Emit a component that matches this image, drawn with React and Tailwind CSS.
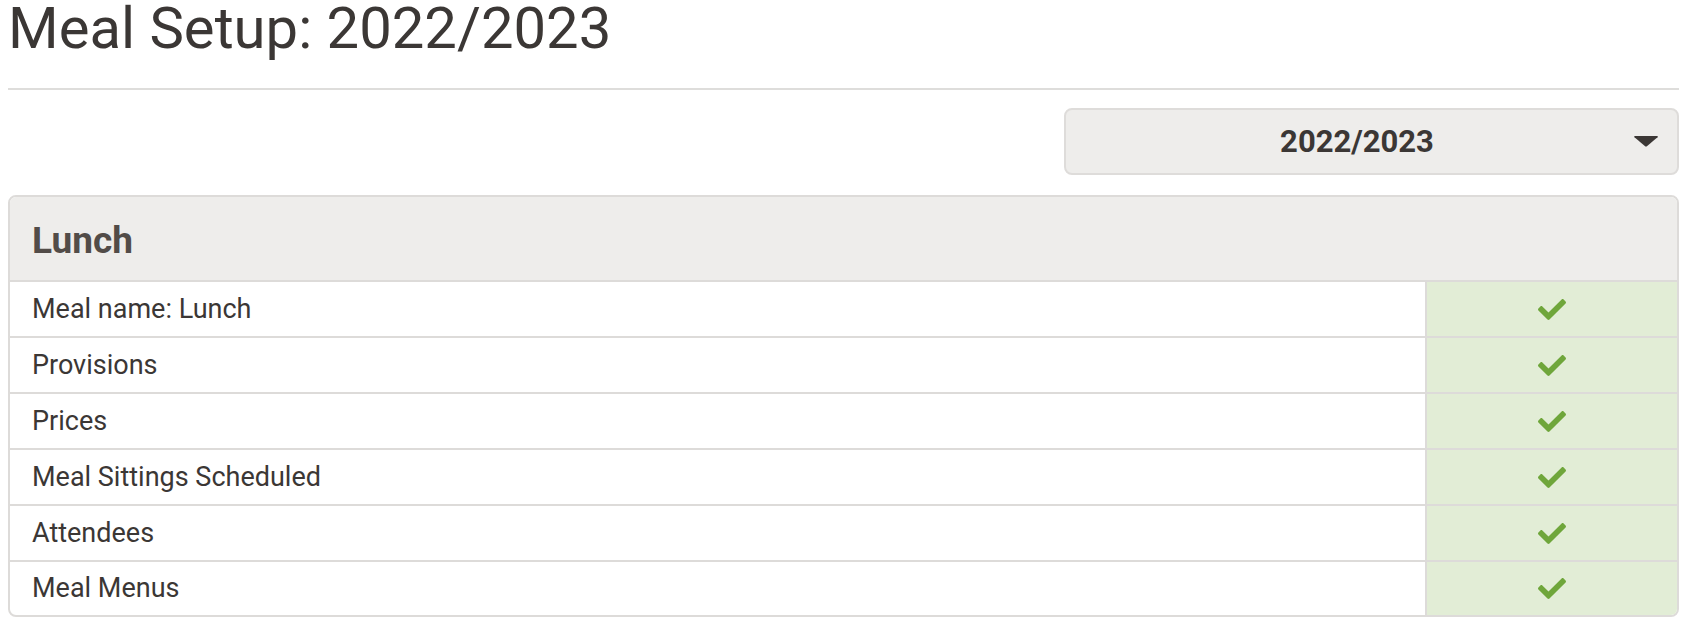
import React from "react";

const rows = [
  "Meal name: Lunch",
  "Provisions",
  "Prices",
  "Meal Sittings Scheduled",
  "Attendees",
  "Meal Menus",
];

function Check() {
  return (
    <svg width="28" height="21" viewBox="0 64 512 384" fill="#6fa63b" aria-hidden="true">
      <path d="M173.898 439.404l-166.4-166.4c-9.997-9.997-9.997-26.206 0-36.204l36.203-36.204c9.997-9.998 26.207-9.998 36.204 0L192 312.69 432.095 72.596c9.997-9.997 26.207-9.997 36.204 0l36.203 36.204c9.997 9.997 9.997 26.206 0 36.204l-294.4 294.401c-9.998 9.997-26.207 9.997-36.204-.001z" />
    </svg>
  );
}

function Caret() {
  return (
    <svg width="26" height="12" viewBox="0 0 26 12" aria-hidden="true">
      <path d="M2 1 L24 1 Q25.5 1 24.5 2.2 L14.2 11 Q13 12 11.8 11 L1.5 2.2 Q0.5 1 2 1 Z" fill="#3b3735" />
    </svg>
  );
}

export default function App() {
  return (
    <div className="bg-white min-h-[630px] text-[#3b3735]" style={{ fontFamily: "Roboto, 'Liberation Sans', sans-serif" }}>
      <div className="ml-[8px] w-[1671px]">
        <h1 className="text-[58px] leading-[57px] font-normal text-[#3b3735]">Meal Setup: 2022/2023</h1>
        <div className="mt-[31px] h-[2px] bg-[#dedddb]" />
        <div className="flex justify-end mt-[18px]">
          <div className="w-[615px] h-[67px] rounded-[8px] border-2 border-[#dedcda] bg-[#eeedeb] flex items-center relative">
            <div className="flex-1 text-center pr-[29px] text-[31px] font-bold leading-none text-[#3b3735]">2022/2023</div>
            <div className="absolute right-[18px] top-[25px] flex">
              <Caret />
            </div>
          </div>
        </div>
        <div className="mt-[20px] border-2 border-[#dddbd9] rounded-[8px] overflow-hidden">
          <div className="h-[85px] bg-[#eeedeb] flex items-center pl-[22px] pt-[4px] border-b-2 border-[#dddbd9]">
            <span className="text-[37px] font-bold text-[#524c48] leading-none">Lunch</span>
          </div>
          {rows.map((r, i) => (
            <div
              key={r}
              className={i < rows.length - 1 ? "flex h-[56px] border-b-2 border-[#dddbd9]" : "flex h-[53px]"}
            >
              <div className="flex-1 flex items-center pl-[22px] text-[27px] leading-none text-[#3b3735]">{r}</div>
              <div className="w-[252px] border-l-2 border-[#dddbd9] bg-[#e2edd6] flex items-center justify-center">
                <Check />
              </div>
            </div>
          ))}
        </div>
      </div>
    </div>
  );
}
